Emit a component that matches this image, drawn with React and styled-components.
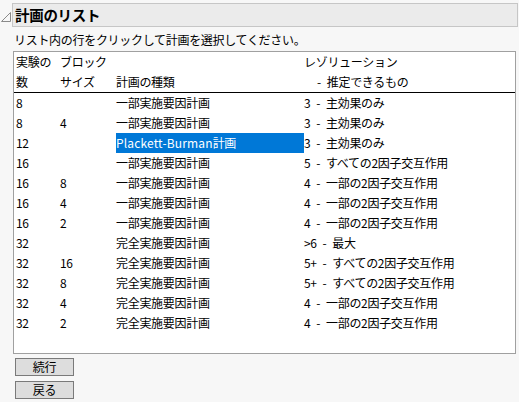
import React from "react";
import styled, { createGlobalStyle } from "styled-components";

const GlobalStyle = createGlobalStyle`
  html, body {
    margin: 0;
    padding: 0;
    background: #f7f7f7;
  }
  body {
    font-family: "Noto Sans CJK JP", "Noto Sans", sans-serif;
    font-size: 12px;
    letter-spacing: -0.3px;
    color: #000;
  }
`;

const rows = [
  ["8", "", "一部実施要因計画", "3 - 主効果のみ"],
  ["8", "4", "一部実施要因計画", "3 - 主効果のみ"],
  ["12", "", "Plackett-Burman計画", "3 - 主効果のみ"],
  ["16", "", "一部実施要因計画", "5 - すべての2因子交互作用"],
  ["16", "8", "一部実施要因計画", "4 - 一部の2因子交互作用"],
  ["16", "4", "一部実施要因計画", "4 - 一部の2因子交互作用"],
  ["16", "2", "一部実施要因計画", "4 - 一部の2因子交互作用"],
  ["32", "", "完全実施要因計画", ">6 - 最大"],
  ["32", "16", "完全実施要因計画", "5+ - すべての2因子交互作用"],
  ["32", "8", "完全実施要因計画", "5+ - すべての2因子交互作用"],
  ["32", "4", "完全実施要因計画", "4 - 一部の2因子交互作用"],
  ["32", "2", "完全実施要因計画", "4 - 一部の2因子交互作用"],
];

// wrap runs of latin letters so they get their own spacing
const withLatin = (text) =>
  text.split(/([A-Za-z-]+)/).map((part, i) =>
    /^[A-Za-z-]+$/.test(part) ? <Latin key={i}>{part}</Latin> : part
  );

const App = () => {
  return (
    <>
      <GlobalStyle />
      <Page>
        <TitleRow>
          <Disclosure width="12" height="12" viewBox="0 0 12 12">
            <polygon points="10.5,1.5 10.5,10.5 1.5,10.5" fill="none" stroke="#8a8a8a" strokeWidth="1" />
          </Disclosure>
          <TitleBox>計画のリスト</TitleBox>
        </TitleRow>
        <Hint>リスト内の行をクリックして計画を選択してください。</Hint>
        <ListBox>
          <HeaderGrid>
            <Cell>実験の</Cell>
            <Cell>ブロック</Cell>
            <Cell></Cell>
            <Cell>レゾリューション</Cell>
            <Cell>数</Cell>
            <Cell>サイズ</Cell>
            <Cell>計画の種類</Cell>
            <Cell indent wide>- 推定できるもの</Cell>
          </HeaderGrid>
          {rows.map((r, i) => (
            <Grid key={i}>
              <Cell>{r[0]}</Cell>
              <Cell>{r[1]}</Cell>
              <Cell selected={i === 2}>{withLatin(r[2])}</Cell>
              <Cell wide>{r[3]}</Cell>
            </Grid>
          ))}
        </ListBox>
        <Buttons>
          <Button>続行</Button>
          <Button>戻る</Button>
        </Buttons>
      </Page>
    </>
  );
};

const Page = styled.div`
  width: 519px;
  height: 402px;
  padding-top: 3px;
  box-sizing: border-box;
`;

const TitleRow = styled.div`
  display: flex;
  align-items: center;
`;

const Disclosure = styled.svg`
  width: 12px;
  height: 12px;
  margin-top: 3px;
  flex: none;
`;

const TitleBox = styled.div`
  flex: 1;
  height: 22px;
  line-height: 22px;
  margin-right: 1px;
  padding-left: 2px;
  background: #ebebeb;
  border: 1px solid #c6c6c6;
  font-size: 14.5px;
  font-weight: bold;
`;

const Hint = styled.div`
  margin: 3px 0 0 14px;
  height: 19px;
  line-height: 19px;
`;

const ListBox = styled.div`
  margin: 2px 0 0 13px;
  width: 503px;
  height: 303px;
  box-sizing: border-box;
  background: #fff;
  border: 1px solid #a0a0a0;
`;

const Grid = styled.div`
  display: grid;
  grid-template-columns: 44px 56px 188px 1fr;
  padding-left: 2px;
`;

const HeaderGrid = styled(Grid)`
  border-bottom: 1px solid #000;
`;

const Cell = styled.div`
  height: 20px;
  line-height: 20px;
  white-space: nowrap;
  word-spacing: ${(p) => (p.wide ? "3.5px" : "0")};
  padding-left: ${(p) => (p.indent ? "13px" : "0")};
  background: ${(p) => (p.selected ? "#0078d7" : "transparent")};
  color: ${(p) => (p.selected ? "#fff" : "#000")};
`;

const Latin = styled.span`
  letter-spacing: 0.15px;
`;

const Buttons = styled.div`
  display: flex;
  flex-direction: column;
  gap: 5px;
  margin: 4px 0 0 15px;
`;

const Button = styled.div`
  width: 59px;
  height: 18px;
  box-sizing: border-box;
  border: 1px solid #7a7a7a;
  background: #dddddd;
  text-align: center;
  line-height: 16px;
  font-size: 12px;
`;

export default App;
